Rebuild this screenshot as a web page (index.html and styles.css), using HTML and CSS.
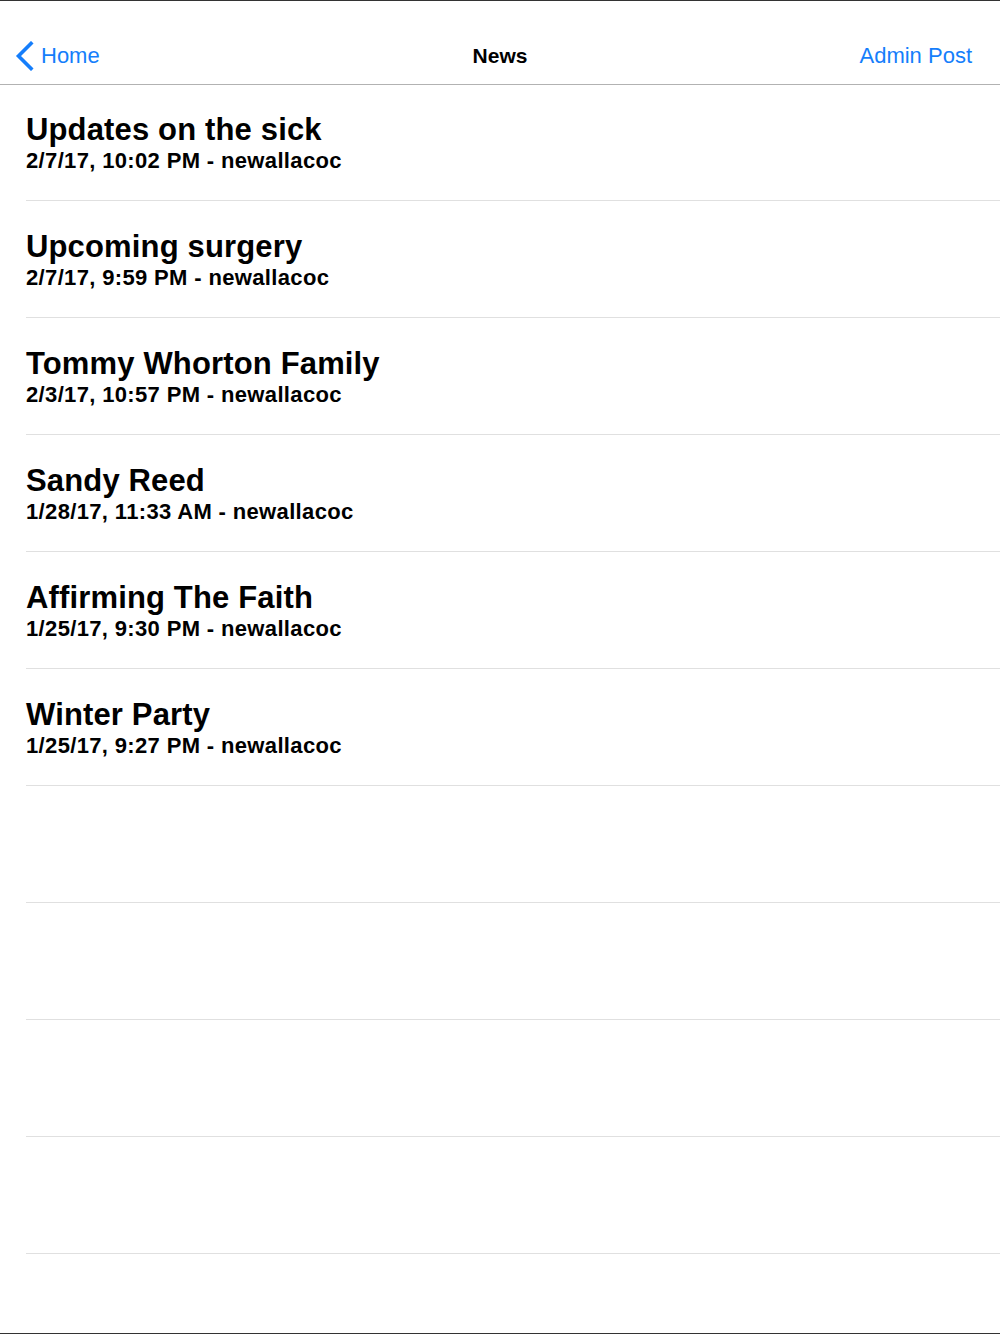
FILE: index.html
```html
<!DOCTYPE html>
<html>
<head>
<meta charset="utf-8">
<link rel="stylesheet" href="styles.css">
</head>
<body>
<div class="screen">
  <header class="navbar">
    <a class="nav-back">
      <svg class="chevron" width="19" height="30" viewBox="0 0 19 30"><path d="M16 2.5 L3.5 15 L16 27.5" fill="none" stroke="#157efb" stroke-width="3.6" stroke-linecap="square" stroke-linejoin="miter"/></svg>
      <span>Home</span>
    </a>
    <div class="nav-title">News</div>
    <a class="nav-action">Admin Post</a>
  </header>
  <ul class="list">
    <li class="row"><div class="title">Updates on the sick</div><div class="meta">2/7/17, 10:02 PM - newallacoc</div></li>
    <li class="row"><div class="title">Upcoming surgery</div><div class="meta">2/7/17, 9:59 PM - newallacoc</div></li>
    <li class="row"><div class="title">Tommy Whorton Family</div><div class="meta">2/3/17, 10:57 PM - newallacoc</div></li>
    <li class="row"><div class="title">Sandy Reed</div><div class="meta">1/28/17, 11:33 AM - newallacoc</div></li>
    <li class="row"><div class="title">Affirming The Faith</div><div class="meta">1/25/17, 9:30 PM - newallacoc</div></li>
    <li class="row"><div class="title">Winter Party</div><div class="meta">1/25/17, 9:27 PM - newallacoc</div></li>
    <li class="row empty"></li>
    <li class="row empty"></li>
    <li class="row empty"></li>
    <li class="row empty"></li>
  </ul>
</div>
</body>
</html>
```
FILE: styles.css
```css
html, body {
  margin: 0;
  padding: 0;
  background: #ffffff;
}
.screen {
  width: 1000px;
  height: 1334px;
  box-sizing: border-box;
  border-top: 1px solid #333333;
  border-bottom: 1px solid #333333;
  background: #ffffff;
  font-family: "Liberation Sans", Arial, sans-serif;
  overflow: hidden;
}
.navbar {
  height: 84px;
  box-sizing: border-box;
  padding-top: 27px;
  border-bottom: 1px solid #b2b2b2;
  display: grid;
  grid-template-columns: 1fr auto 1fr;
  align-items: center;
  background: #ffffff;
}
.nav-back {
  display: flex;
  align-items: center;
  gap: 7px;
  padding-left: 15px;
  color: #157efb;
  font-size: 22px;
}
.chevron {
  display: block;
}
.nav-title {
  font-size: 21px;
  font-weight: bold;
  color: #000000;
}
.nav-action {
  justify-self: end;
  padding-right: 28px;
  color: #157efb;
  font-size: 22px;
}
.list {
  list-style: none;
  margin: 0;
  padding: 0;
}
.row {
  height: 117px;
  box-sizing: border-box;
  margin-left: 26px;
  padding-top: 28px;
  border-bottom: 1px solid #e0e0e0;
}
.row:first-child {
  height: 116px;
  padding-top: 27px;
}
.title {
  font-size: 31px;
  font-weight: bold;
  line-height: 36px;
  letter-spacing: 0.15px;
  color: #000000;
}
.meta {
  font-size: 22px;
  font-weight: bold;
  line-height: 26px;
  letter-spacing: 0.35px;
  color: #000000;
}
```
